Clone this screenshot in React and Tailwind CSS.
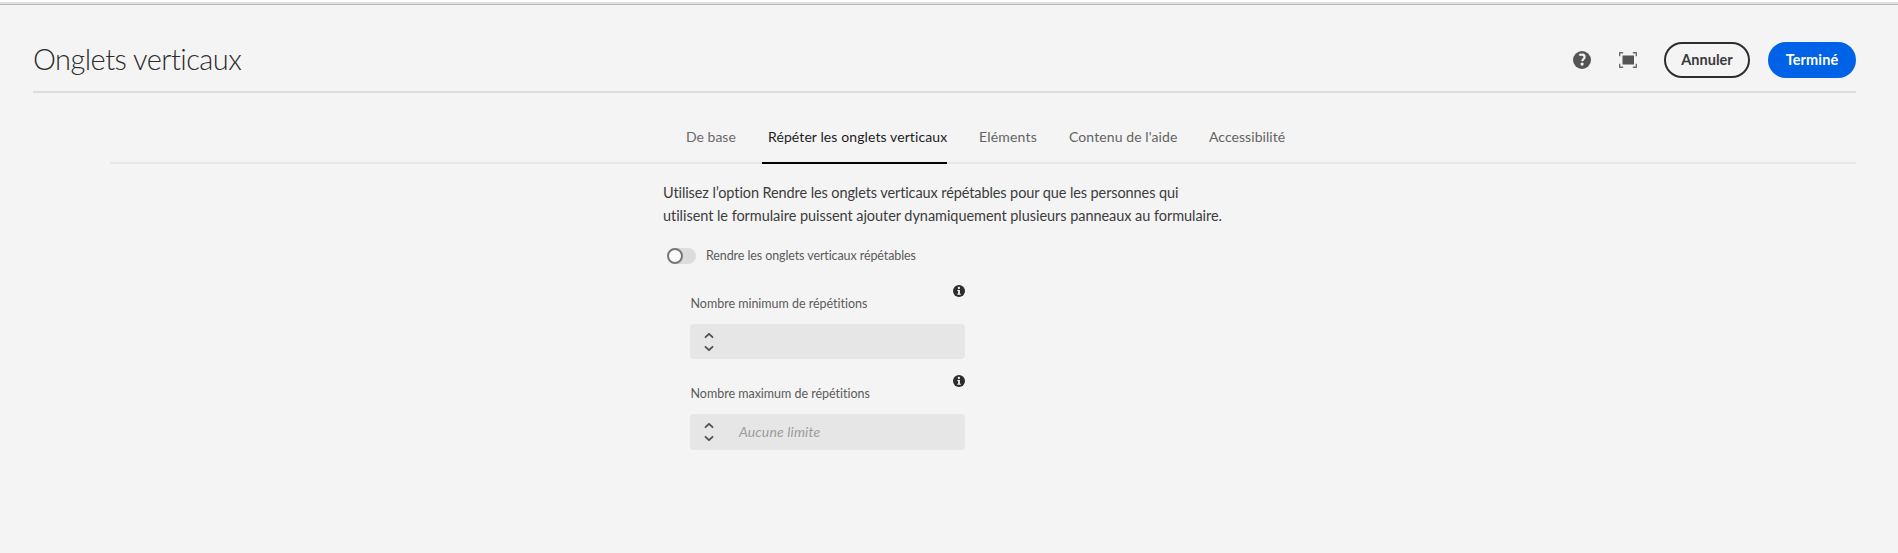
const tabs = [
  { label: "De base", box: "w-[49px] ml-[686px] tracking-[0.01px]", tone: "text-[#6a6a6a]" },
  { label: "Répéter les onglets verticaux", box: "w-[185px] ml-[27px] pl-[6px] tracking-[0.1px] border-b-2 border-black", tone: "text-[#1c1c1c]" },
  { label: "Eléments", box: "w-[58px] ml-[32px] tracking-[0.2px]", tone: "text-[#636363]" },
  { label: "Contenu de l'aide", box: "w-[108px] ml-[32px] tracking-[0.1px]", tone: "text-[#636363]" },
  { label: "Accessibilité", box: "w-[76px] ml-[32px] tracking-[0.05px]", tone: "text-[#636363]" },
];

function HelpIcon() {
  return (
    <svg width="18" height="18" viewBox="0 0 18 18">
      <circle cx="9" cy="9" r="9" fill="#555" />
      <path d="M6.2 4.2C7.3 3.4 11.6 2.9 11.6 5.9c0 2-2.2 2.3-2.3 4.2" fill="none" stroke="#f4f4f4" strokeWidth="2.2" />
      <circle cx="9.1" cy="13.1" r="1.6" fill="#f4f4f4" />
    </svg>
  );
}

function FullScreenIcon() {
  return (
    <svg width="18" height="16" viewBox="0 0 18 16">
      <rect x="3.5" y="3.5" width="11.5" height="9" fill="#555" />
      <path d="M.7 4.2V.7H4.2M13.8 .7h3.5V4.2M17.3 11.8v3.5H13.8M4.2 15.3H.7V11.8" fill="none" stroke="#6e6e6e" strokeWidth="1.4" />
    </svg>
  );
}

function InfoIcon() {
  return (
    <svg width="12" height="12" viewBox="0 0 12 12">
      <circle cx="6" cy="6" r="6" fill="#2c2c2c" />
      <circle cx="5.9" cy="3" r="1.15" fill="#f4f4f4" />
      <path d="M4.3 5.1h2.6v3.6h.9v1H4.3v-1h.8V6.1h-.8z" fill="#f4f4f4" />
    </svg>
  );
}

function Stepper() {
  return (
    <svg width="10" height="20" viewBox="0 0 10 20" fill="none" stroke="#505050" strokeWidth="1.8" strokeLinecap="round" strokeLinejoin="round">
      <path d="M1.5 5.2 5 1.8l3.5 3.4M1.5 14.8 5 18.2l3.5-3.4" />
    </svg>
  );
}

function NumberField({ label, height, placeholder }) {
  return (
    <div className="ml-[27px] w-[275px]">
      <div className="flex h-[12px] justify-end"><InfoIcon /></div>
      <div className="-mt-[3px] h-[20px] pl-[0.5px] text-[12.5px] leading-[20px] tracking-[-0.02px] whitespace-nowrap text-[#5b5b5b]">{label}</div>
      <div className={`mt-[10px] flex items-start rounded-[4px] bg-[#e6e6e6] pt-[8px] pl-[14px] ${height}`}>
        <Stepper />
        {placeholder && <span className="ml-[25px] text-[14px] leading-[20px] tracking-[0.15px] whitespace-nowrap text-[#9c9c9c] italic">{placeholder}</span>}
      </div>
    </div>
  );
}

export default function App() {
  return (
    <div className="h-[553px] w-[1898px] overflow-hidden bg-[#f4f4f4] font-['Lato','Noto_Sans',sans-serif] [font-variant-ligatures:none]">
      <div className="h-[2px] bg-white" />
      <div className="h-[3px] border-b border-[#b5b5b5] bg-[#e0e0e0]" />
      <header className="mr-[42px] ml-[33px] flex h-[88px] items-start border-b-2 border-[#dcdcdc]">
        <h1 className="mt-[36px] text-[29px] leading-[36px] font-light tracking-[-0.54px] text-[#2c2c2c]">Onglets verticaux</h1>
        <div className="mt-[37px] ml-auto flex h-[36px] items-center">
          <HelpIcon />
          <span className="ml-[28px]"><FullScreenIcon /></span>
          <button className="ml-[27px] h-[36px] w-[86px] rounded-full border-2 border-[#2e2e2e] text-[14.5px] font-bold text-[#3a3a3a]">Annuler</button>
          <button className="ml-[18px] h-[36px] w-[88px] rounded-full bg-[#0062e6] text-[14.5px] font-bold tracking-[0.1px] text-white">Terminé</button>
        </div>
      </header>
      <nav className="mt-[27px] mr-[42px] h-[44px]">
        <div className="ml-[110px] -mb-[44px] h-[44px] border-b-2 border-[#e6e6e6]" />
        <div className="relative flex h-[44px]">
          {tabs.map((t) => (
            <div key={t.label} className={`h-[44px] text-[14px] leading-[34px] whitespace-nowrap ${t.box} ${t.tone}`}>{t.label}</div>
          ))}
        </div>
      </nav>
      <main className="ml-[663px]">
        <p className="mt-[17px] text-[14.5px] leading-[23px] whitespace-nowrap text-[#3c3c3c]">
          <span className="tracking-[-0.1px]">Utilisez l’option Rendre les onglets verticaux répétables pour que les personnes qui</span><br />
          <span className="tracking-[-0.05px]">utilisent le formulaire puissent ajouter dynamiquement plusieurs panneaux au formulaire.</span>
        </p>
        <div className="mt-[21px] ml-[4px] flex h-[16px] items-center">
          <div className="h-[16px] w-[29px] rounded-full bg-[#dcdcdc]">
            <div className="size-[16px] rounded-full border-2 border-[#777] bg-[#fafafa]" />
          </div>
          <span className="ml-[10px] text-[12.5px] leading-[16px] tracking-[-0.1px] whitespace-nowrap text-[#5b5b5b]">Rendre les onglets verticaux répétables</span>
        </div>
        <div className="mt-[21px] flex flex-col gap-[16px]">
          <NumberField label="Nombre minimum de répétitions" height="h-[35px]" />
          <NumberField label="Nombre maximum de répétitions" height="h-[36px]" placeholder="Aucune limite" />
        </div>
      </main>
    </div>
  );
}
